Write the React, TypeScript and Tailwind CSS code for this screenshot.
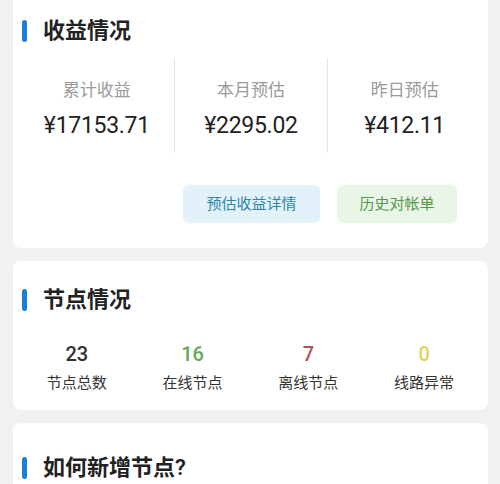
import React from "react";

const font = { fontFamily: "Roboto, 'Noto Sans CJK SC', sans-serif" } as React.CSSProperties;

function Title({ text }: { text: string }) {
  return (
    <div className="flex items-center h-[22px]">
      <div className="w-[5px] h-[22px] rounded-full bg-[#1e7fd8] ml-[9px]" />
      <div className="ml-[16px] text-[22px] leading-[22px] font-semibold text-[#222]">{text}</div>
    </div>
  );
}

export default function App() {
  const stats = [
    { label: "累计收益", value: "¥17153.71" },
    { label: "本月预估", value: "¥2295.02" },
    { label: "昨日预估", value: "¥412.11" },
  ];
  const nodes = [
    { n: "23", label: "节点总数", c: "text-[#333]" },
    { n: "16", label: "在线节点", c: "text-[#5fa85c]" },
    { n: "7", label: "离线节点", c: "text-[#b4534f]" },
    { n: "0", label: "线路异常", c: "text-[#dcd45a]" },
  ];
  return (
    <div
      className="w-[500px] h-[484px] overflow-hidden bg-[#f1f1f1] px-[13px] flex flex-col gap-[13px]"
      style={{ fontFamily: "Roboto, 'Noto Sans CJK SC', sans-serif" }}
    >
      <div className="bg-white rounded-b-[8px] w-[475px] pt-[20px] pb-[25px] shrink-0">
        <Title text="收益情况" />
        <div className="grid grid-cols-3 mt-[16px] px-[7px]">
          {stats.map((s, i) => (
            <div
              key={s.label}
              className={`h-[95px] flex flex-col items-center pt-[22px] ${i > 0 ? "border-l border-[#e6e6e6]" : ""}`}
            >
              <div className="text-[17px] leading-[20px] text-[#9a9a9a]">{s.label}</div>
              <div className="mt-[13px] text-[23px] leading-[26px] text-[#222] tracking-[-0.3px]" style={font}>
                {s.value}
              </div>
            </div>
          ))}
        </div>
        <div className="flex justify-end gap-[17px] pr-[31px] mt-[32px]">
          <div className="w-[137px] h-[38px] rounded-[6px] bg-[#e3f1fb] text-[#2f86ab] text-[15px] flex items-center justify-center">
            预估收益详情
          </div>
          <div className="w-[120px] h-[38px] rounded-[6px] bg-[#e9f6e7] text-[#55984a] text-[15px] flex items-center justify-center">
            历史对帐单
          </div>
        </div>
      </div>

      <div className="bg-white rounded-[8px] w-[475px] pt-[28px] pb-[17px] shrink-0">
        <Title text="节点情况" />
        <div className="grid grid-cols-4 px-[6px] mt-[31px]">
          {nodes.map((n) => (
            <div key={n.label} className="flex flex-col items-center">
              <div className={`text-[20px] leading-[24px] font-medium ${n.c}`}>{n.n}</div>
              <div className="mt-[7px] text-[15px] leading-[20px] text-[#333]">{n.label}</div>
            </div>
          ))}
        </div>
      </div>

      <div className="bg-white rounded-[8px] w-[475px] pt-[34px] h-[100px] shrink-0">
        <Title text="如何新增节点?" />
      </div>
    </div>
  );
}
